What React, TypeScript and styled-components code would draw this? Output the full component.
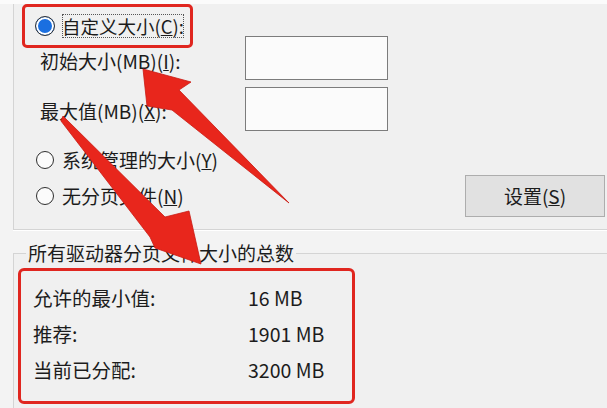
import React from "react";
import styled, { createGlobalStyle } from "styled-components";

const Global = createGlobalStyle`
  * { box-sizing: border-box; }
  html, body { margin: 0; padding: 0; }
  body {
    font-family: "Noto Sans CJK SC", "Noto Sans", sans-serif;
    color: #1c1c1c;
    background: #f3f3f3;
  }
`;

const Window = styled.div`
  position: relative;
  width: 607px;
  height: 408px;
  overflow: hidden;
  background: #f3f3f3;
  font-size: 19px;
`;

const TopStrip = styled.div`
  height: 4px;
  background: #fbfbfb;
`;

const GroupBox = styled.div`
  margin-left: 13px;
  height: 226px;
  border-left: 1px solid #d4d4d4;
  border-bottom: 1px solid #d4d4d4;
  box-shadow: 0 1px 0 #ffffff;
  background: #f0f0f0;
  display: grid;
  grid-template-columns: 231px 143px 1fr;
`;

const LeftColumn = styled.div`
  display: flex;
  flex-direction: column;
  align-items: flex-start;
`;

const InputColumn = styled.div`
  display: flex;
  flex-direction: column;
  gap: 7px;
  padding-top: 32px;
`;

const ButtonColumn = styled.div`
  display: flex;
  justify-content: flex-end;
  align-items: flex-end;
  padding: 0 2px 12px 0;
`;

const Highlight = styled.div`
  margin-left: 8px;
  width: 171px;
  height: 44px;
  border: 3px solid #e0261f;
  border-radius: 5px;
  display: flex;
  align-items: center;
  gap: 7px;
  padding-left: 10px;
`;

const RadioRow = styled.div<{ $top: number }>`
  margin-top: ${(p) => p.$top}px;
  margin-left: 22px;
  height: 24px;
  display: flex;
  align-items: center;
  gap: 8px;
  line-height: 24px;
  white-space: nowrap;
`;

const RadioOn = styled.span`
  width: 20px;
  height: 20px;
  border-radius: 50%;
  border: 1.5px solid #333;
  background: #1a6fe0;
  box-shadow: inset 0 0 0 2px #ffffff;
  flex: none;
`;

const RadioOff = styled.span`
  width: 18px;
  height: 18px;
  border-radius: 50%;
  border: 1.5px solid #2e2e2e;
  background: #fbfbfb;
  flex: none;
`;

const FocusLabel = styled.span`
  font-size: 18.5px;
  line-height: 24px;
  outline: 1px dotted #555;
  outline-offset: -1px;
  white-space: nowrap;
`;

const FieldLabel = styled.div<{ $top: number }>`
  margin-top: ${(p) => p.$top}px;
  margin-left: 26px;
  line-height: 24px;
  white-space: nowrap;
`;

const TextBox = styled.div`
  width: 143px;
  height: 44px;
  border: 1px solid #7c7c7c;
  background: #fbfbfb;
`;

const Button = styled.div`
  width: 140px;
  height: 42px;
  border: 1px solid #adadad;
  background: #e1e1e1;
  display: flex;
  align-items: center;
  justify-content: center;
  line-height: 24px;
`;

const TotalsGroup = styled.fieldset`
  margin: 11px 0 0 13px;
  padding: 0;
  border: none;
  border-top: 1px solid #d4d4d4;
  border-left: 1px solid #d4d4d4;
  min-height: 200px;
  background: #f0f0f0;
  font-size: 19.5px;
`;

const Legend = styled.legend`
  margin-left: 12px;
  padding: 0 2px;
  line-height: 24px;
  font-size: 19px;
`;

const TotalsBox = styled.div`
  margin: 3px 0 0 4px;
  width: 337px;
  border: 3px solid #e0261f;
  border-radius: 6px;
  padding: 9px 0 13px 12px;
`;

const Row = styled.div`
  display: grid;
  grid-template-columns: 215px 1fr;
  line-height: 36px;
  height: 36px;
  white-space: nowrap;
`;

const Arrows = styled.svg`
  position: absolute;
  left: 0;
  top: 0;
  width: 607px;
  height: 408px;
  pointer-events: none;
`;

const rows = [
  { label: "允许的最小值:", value: "16 MB" },
  { label: "推荐:", value: "1901 MB" },
  { label: "当前已分配:", value: "3200 MB" },
];

export default function App() {
  return (
    <Window>
      <Global />
      <TopStrip />
      <GroupBox>
        <LeftColumn>
          <Highlight>
            <RadioOn />
            <FocusLabel>
              自定义大小(<u>C</u>):
            </FocusLabel>
          </Highlight>
          <FieldLabel $top={1}>
            初始大小(MB)(<u>I</u>):
          </FieldLabel>
          <FieldLabel $top={26}>
            最大值(MB)(<u>X</u>):
          </FieldLabel>
          <RadioRow $top={25}>
            <RadioOff />
            <span>
              系统管理的大小(<u>Y</u>)
            </span>
          </RadioRow>
          <RadioRow $top={12}>
            <RadioOff />
            <span>
              无分页文件(<u>N</u>)
            </span>
          </RadioRow>
        </LeftColumn>
        <InputColumn>
          <TextBox />
          <TextBox />
        </InputColumn>
        <ButtonColumn>
          <Button>
            设置(<u>S</u>)
          </Button>
        </ButtonColumn>
      </GroupBox>
      <TotalsGroup>
        <Legend>所有驱动器分页文件大小的总数</Legend>
        <TotalsBox>
          {rows.map((r) => (
            <Row key={r.label}>
              <span>{r.label}</span>
              <span>{r.value}</span>
            </Row>
          ))}
        </TotalsBox>
      </TotalsGroup>
      <Arrows viewBox="0 0 607 408">
        <polygon
          points="143,69 191,82 179,90 289,203 172,110 147,106"
          fill="#e8261c"
          stroke="#c91a13"
          strokeWidth="0.8"
          strokeLinejoin="round"
        />
        <polygon
          points="63,116 165,217 189,211 201,264 155,248 150,237 61,121"
          fill="#e8261c"
          stroke="#c91a13"
          strokeWidth="0.8"
          strokeLinejoin="round"
        />
      </Arrows>
    </Window>
  );
}
